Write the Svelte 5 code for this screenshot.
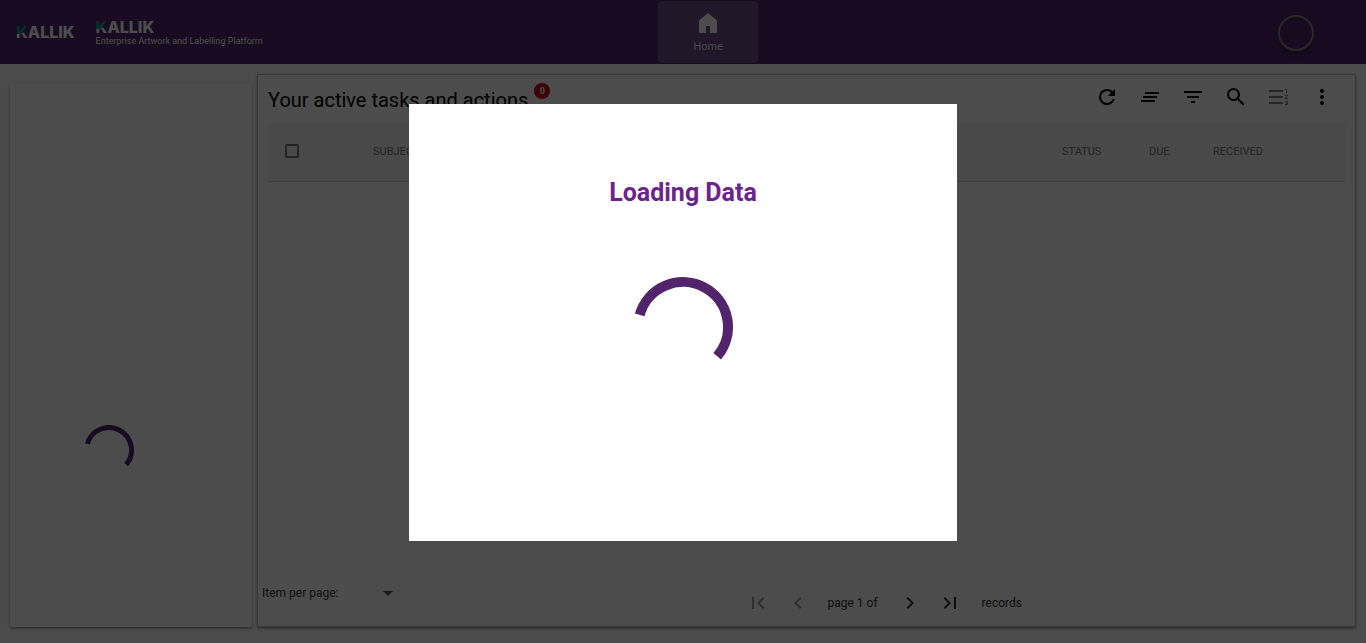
<script>
  let selected = $state(false);
  let perPage = $state('');
  const taskCount = 0;
</script>

{#snippet arc(size)}
  <svg class="arc" width={size} height={size} viewBox="-50 -50 100 100" aria-hidden="true">
    <path d="M-43.3 -12.2A45 45 0 1 1 34.2 29.3" fill="none" stroke="currentColor" stroke-width="10" />
  </svg>
{/snippet}

{#snippet icon(d)}
  <svg width="24" height="24" viewBox="0 0 24 24" fill="currentColor" aria-hidden="true"><path {d} /></svg>
{/snippet}

<div class="page">
  <header>
    <div class="brand">
      <span class="logo"><span class="k">K</span>ALLIK</span>
      <div class="product">
        <span class="logo"><span class="k">K</span>ALLIK</span>
        <span class="tagline">Enterprise Artwork and Labelling Platform</span>
      </div>
    </div>
    <a class="home" href="#home">
      <svg width="24" height="24" viewBox="0 0 24 24" fill="currentColor" aria-hidden="true">
        <path d="M12 2 3 9.500V20.500Q3 22 4.500 22H10V15H14V22H19.500Q21 22 21 20.500V9.500Z" />
      </svg>
      <span>Home</span>
    </a>
    <div class="account"><button class="avatar" aria-label="Account"></button></div>
  </header>

  <main>
    <aside class="card">{@render arc(50)}</aside>

    <section class="card tasks">
      <div class="heading">
        <h1>Your active tasks and actions<span class="badge">{taskCount}</span></h1>
        <div class="tools">
          <button aria-label="Refresh">{@render icon('M17.650 6.350A7.960 7.960 0 0 0 12 4a8 8 0 1 0 7.730 10h-2.080A6 6 0 1 1 12 6c1.660 0 3.140.690 4.220 1.780L13 11h7V4z')}</button>
          <button aria-label="Clear all">{@render icon('M5 13h14v-2H5v2zm-2 4h14v-2H3v2zM7 7v2h14V7H7z')}</button>
          <button aria-label="Filter">{@render icon('M10 18h4v-2h-4v2zM3 6v2h18V6H3zm3 7h12v-2H6v2z')}</button>
          <button aria-label="Search">{@render icon('M15.500 14h-.790l-.280-.270A6.470 6.470 0 0 0 16 9.500 6.500 6.500 0 1 0 9.500 16c1.610 0 3.090-.590 4.230-1.570l.270.280v.790l5 4.990L20.490 19l-4.990-5zm-6 0C7.010 14 5 11.990 5 9.500S7.010 5 9.500 5 14 7.010 14 9.500 11.990 14 9.500 14z')}</button>
          <button aria-label="Numbered list" disabled>
            <svg width="24" height="24" viewBox="0 0 24 24" fill="currentColor" aria-hidden="true">
              <path d="M2 5h14v2H2zM2 11h14v2H2zM2 17h14v2H2z" />
              <path d="M18 4.500h1.500V8M18 10.500h2.500L18 13.500h3M18 16.500h2.500v3H18M18.500 18h2" fill="none" stroke="currentColor" />
            </svg>
          </button>
          <button aria-label="More options">{@render icon('M12 8a2 2 0 1 0 0-4 2 2 0 0 0 0 4zm0 2a2 2 0 1 0 0 4 2 2 0 0 0 0-4zm0 6a2 2 0 1 0 0 4 2 2 0 0 0 0-4z')}</button>
        </div>
      </div>

      <table>
        <colgroup>
          <col class="c-check" /><col /><col class="c-status" /><col class="c-due" /><col class="c-received" />
        </colgroup>
        <thead>
          <tr>
            <th><input type="checkbox" aria-label="Select all" bind:checked={selected} /></th>
            <th>SUBJECT</th>
            <th>STATUS</th>
            <th>DUE</th>
            <th>RECEIVED</th>
          </tr>
        </thead>
      </table>

      <footer>
        <div class="per-page">
          <label for="per-page">Item per page:</label>
          <div class="select">
            <select id="per-page" bind:value={perPage}><option value=""></option></select>
            <svg width="10" height="5" viewBox="0 0 10 5" aria-hidden="true"><path d="M0 0h10L5 5z" fill="currentColor" /></svg>
          </div>
        </div>
        <nav aria-label="Pagination">
          <button disabled aria-label="First page">{@render icon('M18.410 16.590 13.820 12l4.590-4.590L17 6l-6 6 6 6zM6 6h2v12H6z')}</button>
          <button disabled aria-label="Previous page">{@render icon('M15.410 7.410 14 6l-6 6 6 6 1.410-1.410L10.830 12z')}</button>
          <span>page 1 of</span>
          <button aria-label="Next page">{@render icon('M10 6 8.590 7.410 13.170 12l-4.580 4.590L10 18l6-6z')}</button>
          <button aria-label="Last page">{@render icon('M5.590 7.410 10.180 12l-4.590 4.590L7 18l6-6-6-6zM16 6h2v12h-2z')}</button>
          <span class="records">records</span>
        </nav>
      </footer>
    </section>
  </main>
</div>

<div class="backdrop">
  <div class="dialog" role="dialog" aria-modal="true" aria-labelledby="loading-title">
    <h2 id="loading-title">Loading Data</h2>
    {@render arc(100)}
  </div>
</div>

<style>
  :global(body) {
    margin: 0;
    background: #fafafa;
    font-family: Roboto, sans-serif;
  }
  * {
    box-sizing: border-box;
  }
  svg {
    display: block;
  }
  button {
    padding: 0;
    border: 0;
    background: none;
    color: inherit;
    font: inherit;
  }
  .page {
    display: flex;
    flex-direction: column;
    min-height: 100vh;
  }

  header {
    display: grid;
    grid-template-columns: 13fr 100px 12fr;
    height: 64px;
    background: #51246b;
    color: #fff;
  }
  .brand {
    display: flex;
    align-items: center;
    gap: 21px;
    padding-left: 16px;
  }
  .logo {
    font: 800 16px/16px Inter, sans-serif;
  }
  .k {
    background: linear-gradient(165deg, #00a591 55%, #fff 55%);
    background-clip: text;
    color: transparent;
  }
  .product {
    display: flex;
    flex-direction: column;
    padding-top: 2px;
  }
  .tagline {
    font-size: 9px;
    line-height: 12px;
    white-space: nowrap;
  }
  .home {
    display: flex;
    flex-direction: column;
    align-items: center;
    gap: 4px;
    height: 62px;
    margin-top: 1px;
    padding-top: 10px;
    border-radius: 4px;
    background: rgba(255, 255, 255, 0.2);
    color: #fff;
    font-size: 11px;
    line-height: 16px;
    text-decoration: none;
  }
  .home span {
    opacity: 0.9;
  }
  .account {
    display: flex;
    align-items: center;
    justify-content: flex-end;
    padding: 2px 52px 0 0;
  }
  .avatar {
    width: 36px;
    height: 36px;
    border: 2px solid #888;
    border-radius: 50%;
    box-shadow: 0 3px 6px rgba(0, 0, 0, 0.3);
  }

  main {
    display: grid;
    flex: 1;
    grid-template-columns: 242px 1fr;
    gap: 5px;
    padding: 10px 10px 16px;
  }
  .card {
    background: #fff;
    border-radius: 2px;
    box-shadow: 0 2px 2px rgba(0, 0, 0, 0.25), 0 1px 4px rgba(0, 0, 0, 0.1);
  }
  aside {
    margin-top: 10px;
    padding: 341px 74px 0;
  }
  .arc {
    color: #51246b;
  }
  .tasks {
    display: flex;
    flex-direction: column;
    border: 1px solid #bbb;
  }

  .heading {
    display: flex;
    justify-content: space-between;
    height: 47px;
    padding: 0 12px 0 10px;
  }
  h1 {
    display: flex;
    margin: 0;
    font-size: 20px;
    font-weight: 400;
    line-height: 50px;
  }
  .badge {
    width: 16px;
    height: 16px;
    margin: 8px 0 0 6px;
    border-radius: 50%;
    background: #d0021b;
    color: #fff;
    font-size: 9px;
    font-weight: 700;
    line-height: 16px;
    text-align: center;
  }
  .tools {
    display: flex;
    height: 44px;
  }
  .tools button {
    display: grid;
    place-items: center;
    width: 43px;
  }
  .tools button:disabled {
    opacity: 0.5;
  }

  table {
    width: calc(100% - 20px);
    margin: 0 10px;
    border-collapse: collapse;
    table-layout: fixed;
    background: #f5f5f5;
  }
  .c-check {
    width: 105px;
  }
  .c-status {
    width: 87px;
  }
  .c-due {
    width: 64px;
  }
  .c-received {
    width: 132px;
  }
  th {
    height: 59px;
    padding: 0;
    border-bottom: 1px solid #ccc;
    color: #757575;
    font-size: 11px;
    font-weight: 400;
    text-align: left;
  }
  input {
    display: block;
    width: 14px;
    height: 14px;
    margin: 0 17px;
    border: 2px solid #757575;
    border-radius: 2px;
    appearance: none;
  }

  footer {
    display: grid;
    grid-template-columns: 3fr auto 2fr;
    margin-top: auto;
    padding: 0 4px;
    color: #333;
    font-size: 12px;
  }
  .per-page {
    display: flex;
    align-items: center;
    gap: 20px;
    height: 26px;
  }
  .select {
    display: flex;
    align-items: center;
  }
  select {
    width: 35px;
    margin-right: -10px;
    border: 0;
    appearance: none;
    background: none;
    font: inherit;
  }
  .select svg {
    color: #555;
    pointer-events: none;
  }
  nav {
    display: flex;
    align-items: center;
    height: 46px;
  }
  nav button {
    display: grid;
    place-items: center;
    width: 40px;
    height: 40px;
  }
  nav button:disabled {
    color: #999;
  }
  nav span {
    margin: 0 12px 0 10px;
  }
  nav .records {
    margin: 0 12px;
  }

  .backdrop {
    position: fixed;
    inset: 0;
    display: flex;
    align-items: center;
    justify-content: center;
    padding-top: 2px;
    background: rgba(0, 0, 0, 0.7);
  }
  .dialog {
    display: flex;
    flex-direction: column;
    align-items: center;
    gap: 68px;
    width: 548px;
    max-width: 90vw;
    padding: 73px 24px 164px;
    background: #fff;
  }
  h2 {
    margin: 0;
    color: #6b238e;
    font-size: 25px;
    font-weight: 700;
    line-height: 32px;
  }
</style>
